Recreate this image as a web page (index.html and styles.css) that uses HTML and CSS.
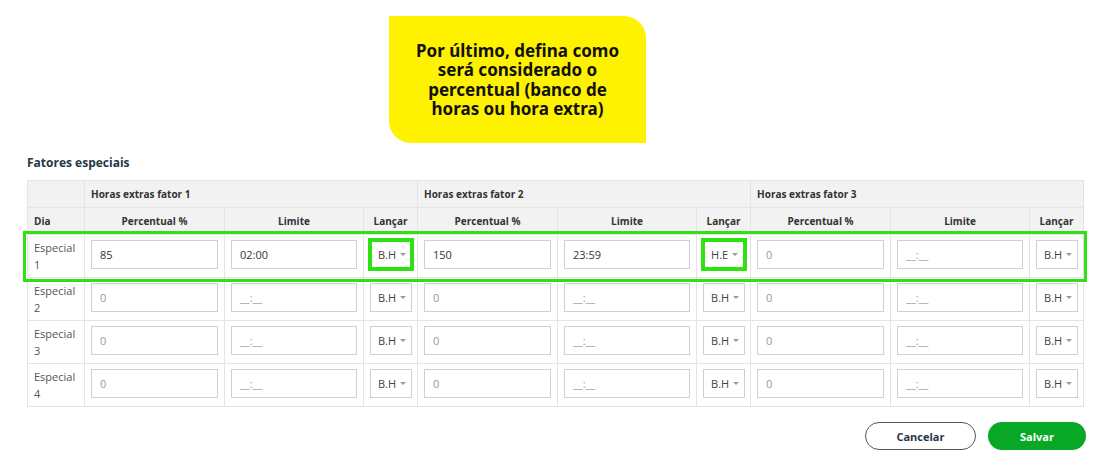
FILE: index.html
```html
<!DOCTYPE html>
<html lang="pt-BR">
<head>
    <meta charset="UTF-8">
    <meta name="viewport" content="width=device-width, initial-scale=1.0">
    <title>Fatores especiais</title>
    <link rel="stylesheet" href="styles.css">
</head>
<body>
    <div class="page">
        <div class="callout">
            <p>Por último, defina como será considerado o percentual (banco de horas ou hora extra)</p>
        </div>

        <h3 class="section-title">Fatores especiais</h3>

        <div class="table-wrap">
            <table class="factors">
                <colgroup>
                    <col class="c-dia">
                    <col class="c-perc"><col class="c-lim"><col class="c-lanc">
                    <col class="c-perc"><col class="c-lim"><col class="c-lanc">
                    <col class="c-perc"><col class="c-lim"><col class="c-lanc">
                </colgroup>
                <thead>
                    <tr class="group-row">
                        <th></th>
                        <th colspan="3" class="left">Horas extras fator 1</th>
                        <th colspan="3" class="left">Horas extras fator 2</th>
                        <th colspan="3" class="left">Horas extras fator 3</th>
                    </tr>
                    <tr class="head-row">
                        <th class="left">Dia</th>
                        <th>Percentual %</th><th>Limite</th><th>Lançar</th>
                        <th>Percentual %</th><th>Limite</th><th>Lançar</th>
                        <th>Percentual %</th><th>Limite</th><th>Lançar</th>
                    </tr>
                </thead>
                <tbody>
                    <tr>
                        <td class="day">Especial<br>1</td>
                        <td><input type="text" value="85"></td>
                        <td><input type="text" value="02:00"></td>
                        <td><span class="select marked">B.H<span class="caret"></span></span></td>
                        <td><input type="text" value="150"></td>
                        <td><input type="text" value="23:59"></td>
                        <td><span class="select marked">H.E<span class="caret"></span></span></td>
                        <td><input type="text" placeholder="0"></td>
                        <td><input type="text" placeholder="__:__"></td>
                        <td><span class="select">B.H<span class="caret"></span></span></td>
                    </tr>
                    <tr>
                        <td class="day">Especial<br>2</td>
                        <td><input type="text" placeholder="0"></td>
                        <td><input type="text" placeholder="__:__"></td>
                        <td><span class="select">B.H<span class="caret"></span></span></td>
                        <td><input type="text" placeholder="0"></td>
                        <td><input type="text" placeholder="__:__"></td>
                        <td><span class="select">B.H<span class="caret"></span></span></td>
                        <td><input type="text" placeholder="0"></td>
                        <td><input type="text" placeholder="__:__"></td>
                        <td><span class="select">B.H<span class="caret"></span></span></td>
                    </tr>
                    <tr>
                        <td class="day">Especial<br>3</td>
                        <td><input type="text" placeholder="0"></td>
                        <td><input type="text" placeholder="__:__"></td>
                        <td><span class="select">B.H<span class="caret"></span></span></td>
                        <td><input type="text" placeholder="0"></td>
                        <td><input type="text" placeholder="__:__"></td>
                        <td><span class="select">B.H<span class="caret"></span></span></td>
                        <td><input type="text" placeholder="0"></td>
                        <td><input type="text" placeholder="__:__"></td>
                        <td><span class="select">B.H<span class="caret"></span></span></td>
                    </tr>
                    <tr>
                        <td class="day">Especial<br>4</td>
                        <td><input type="text" placeholder="0"></td>
                        <td><input type="text" placeholder="__:__"></td>
                        <td><span class="select">B.H<span class="caret"></span></span></td>
                        <td><input type="text" placeholder="0"></td>
                        <td><input type="text" placeholder="__:__"></td>
                        <td><span class="select">B.H<span class="caret"></span></span></td>
                        <td><input type="text" placeholder="0"></td>
                        <td><input type="text" placeholder="__:__"></td>
                        <td><span class="select">B.H<span class="caret"></span></span></td>
                    </tr>
                </tbody>
            </table>
            <div class="row-highlight"></div>
        </div>

        <div class="actions">
            <button class="btn btn-outline">Cancelar</button>
            <button class="btn btn-primary">Salvar</button>
        </div>
    </div>
</body>
</html>
```

FILE: styles.css
```css
body {
    margin: 0;
    background-color: #ffffff;
    color: #333333;
    font-family: "Open Sans", "Noto Sans", sans-serif;
}
.page {
    padding: 16px 10px 0 27px;
}
.callout {
    margin-left: 362px;
    width: 257px;
    height: 127px;
    display: flex;
    align-items: center;
    justify-content: center;
    background-color: #fff200;
    border-radius: 0 22px 0 22px;
}
.callout p {
    margin: 0;
    padding: 0 22px;
    text-align: center;
    color: #111111;
    font-family: "Noto Sans", sans-serif;
    font-weight: 700;
    font-size: 17px;
    line-height: 19.5px;
}
.section-title {
    margin: 12px 0 9px;
    font-size: 12px;
    line-height: 16px;
    font-weight: 700;
    color: #263645;
}
.table-wrap {
    position: relative;
    width: 1055px;
}
.factors {
    width: 1055px;
    table-layout: fixed;
    border-collapse: collapse;
    font-size: 10px;
}
.c-dia { width: 57px; }
.c-perc { width: 140px; }
.c-lim { width: 139px; }
.c-lanc { width: 54px; }
.factors th,
.factors td {
    border: 1px solid #e4e4e4;
}
.factors th {
    height: 26px;
    padding: 0 6px;
    background-color: #f2f2f2;
    font-weight: 700;
    color: #333333;
    text-align: center;
}
.factors th.left {
    text-align: left;
}
.factors td {
    height: 37px;
    padding: 5px 6px 0;
    vertical-align: top;
}
.factors td.day {
    padding: 0 6px;
    vertical-align: middle;
    font-size: 11px;
    line-height: 17px;
    color: #555555;
}
.factors input {
    box-sizing: border-box;
    display: block;
    width: 100%;
    height: 29px;
    padding: 0 8px;
    border: 1px solid #c9d1da;
    border-radius: 0;
    font-family: inherit;
    font-size: 11px;
    color: #333333;
    outline: none;
}
.factors input::placeholder {
    color: #9a9a9a;
}
.select {
    box-sizing: border-box;
    display: flex;
    align-items: center;
    gap: 4px;
    width: 42px;
    height: 29px;
    padding-left: 7px;
    border: 1px solid #c9d1da;
    font-size: 11px;
    color: #444444;
}
.select.marked {
    outline: 4px solid #2fe013;
    outline-offset: -2px;
}
.caret {
    width: 0;
    height: 0;
    border-left: 3.5px solid transparent;
    border-right: 3.5px solid transparent;
    border-top: 3.5px solid #9a9a9a;
}
.row-highlight {
    position: absolute;
    left: -4px;
    top: 51px;
    width: 1058px;
    height: 45px;
    border: 3px solid #2fe013;
    pointer-events: none;
}
.actions {
    display: flex;
    justify-content: flex-end;
    gap: 12px;
    margin-top: 15px;
}
.btn {
    height: 28px;
    border-radius: 14px;
    font-family: inherit;
    font-size: 11px;
    font-weight: 700;
    cursor: pointer;
}
.btn-outline {
    width: 111px;
    background-color: #ffffff;
    border: 1px solid #555555;
    color: #263645;
}
.btn-primary {
    width: 98px;
    background-color: #08a826;
    border: none;
    color: #ffffff;
}
```
